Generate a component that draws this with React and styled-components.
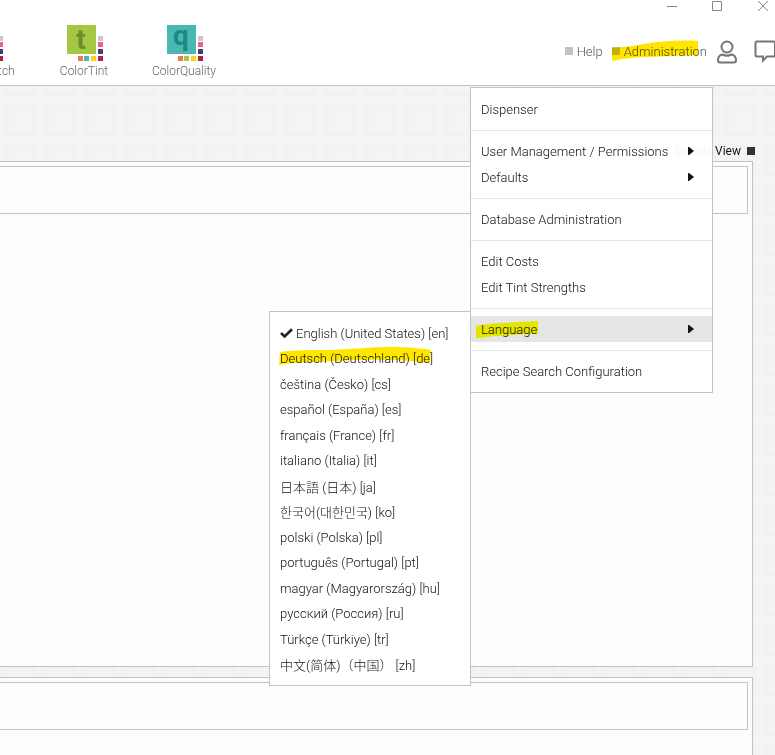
import React from "react";
import styled, { createGlobalStyle } from "styled-components";

const patternTile = encodeURIComponent(
  `<svg xmlns="http://www.w3.org/2000/svg" width="40" height="40"><rect width="40" height="40" fill="#f4f4f4"/><rect x="7" y="7" width="27" height="27" fill="#f4f4f4" stroke="#f1f1f1" stroke-width="3"/></svg>`
);

const GlobalStyle = createGlobalStyle`
  * {
    box-sizing: border-box;
  }

  body {
    margin: 0;
    background: #f4f4f4;
    font-family: Roboto, "Noto Sans CJK JP", sans-serif;
    font-size: 13px;
    font-weight: 300;
    color: #111;
  }

  button {
    padding: 0;
    border: 0;
    background: none;
    font: inherit;
    color: inherit;
    cursor: pointer;
  }

  svg {
    display: block;
    overflow: visible;
  }
`;

const Page = styled.div`
  display: flex;
  flex-direction: column;
  min-height: 100vh;
  background: url("data:image/svg+xml,${patternTile}") 0 20px;
`;

const Header = styled.header`
  position: relative;
  background: #fff;
  border-bottom: 1px solid #c3c3c3;
`;

const WindowBar = styled.div`
  display: flex;
  justify-content: flex-end;
  gap: 34px;
  padding-right: 6px;
`;

const WindowButton = styled.button`
  width: 12px;
  height: 13px;
`;

const HeaderRow = styled.div`
  display: flex;
  justify-content: space-between;
  padding: 12px 0 6px;
`;

const Apps = styled.nav`
  display: flex;
  margin-left: -66px;
`;

const AppLink = styled.a`
  display: flex;
  flex-direction: column;
  align-items: center;
  gap: 2px;
  width: 100px;
  color: #666;
  font-size: 12px;
  line-height: 16px;
  text-decoration: none;
`;

const AppLetter = styled.text`
  font-family: Roboto, sans-serif;
  font-size: 28px;
  font-weight: 700;
  text-anchor: middle;
`;

const Tools = styled.div`
  display: flex;
  align-items: flex-start;
  gap: 9px;
  padding-top: 15px;
`;

const ToolButton = styled.button`
  position: relative;
  display: flex;
  align-items: center;
  gap: 4px;
  height: 22px;
  color: #555;

  &::before {
    content: "";
    width: 8px;
    height: 8px;
    background: #c3c3c3;
  }
`;

const IconButton = styled.button`
  height: 24px;
  margin-right: 7px;
  color: #757575;

  &:last-child {
    margin-right: 0;
  }
`;

const Marker = styled.svg`
  position: absolute;
  left: ${({ $left }) => $left}px;
  bottom: ${({ $bottom }) => $bottom}px;
  mix-blend-mode: multiply;
  pointer-events: none;
`;

const MenuList = styled.ul`
  position: absolute;
  z-index: 2;
  margin: 0;
  padding: 8px 0;
  list-style: none;
  background: rgba(255, 255, 255, 0.96);
  border: 1px solid #c3c3c3;
`;

const AdminMenu = styled(MenuList)`
  top: 100%;
  right: 62px;
  width: 243px;
  margin-top: 2px;
`;

const LanguageMenu = styled(MenuList)`
  top: -5px;
  right: 100%;
  width: 202px;
`;

const Separator = styled.li`
  height: 1px;
  margin: 8px 0 7px;
  background: #e6e6e8;
`;

const MenuItem = styled.li`
  position: relative;
  background: ${({ $active }) => ($active ? "#e5e5e5" : "transparent")};
`;

const MenuButton = styled.button`
  display: flex;
  align-items: center;
  justify-content: space-between;
  width: 100%;
  height: 26px;
  padding: 0 18px 0 10px;
`;

const LanguageButton = styled.button`
  display: flex;
  align-items: center;
  gap: 3px;
  width: 100%;
  height: 26px;
  padding: 0 10px;
  white-space: nowrap;

  li:nth-child(even) > & {
    height: 25px;
  }
`;

const ViewBar = styled.div`
  display: flex;
  align-items: flex-end;
  justify-content: flex-end;
  height: 75px;
  padding: 0 20px 2px;
`;

const ViewButton = styled.button`
  display: flex;
  align-items: center;
  gap: 6px;
  height: 16px;
  font-size: 12px;
  font-weight: 400;

  &::after {
    content: "";
    width: 8px;
    height: 8px;
    background: #333;
  }
`;

const Main = styled.main`
  flex: 1;
  display: flex;
  flex-direction: column;
  gap: 10px;
  margin-right: 22px;
`;

const Panel = styled.section`
  flex: ${({ $grow }) => ($grow ? 1 : "none")};
  min-height: ${({ $grow }) => ($grow ? "78px" : "506px")};
  padding: 4px 4px 4px 0;
  background: #fdfdfd;
  border: solid #c3c3c3;
  border-width: ${({ $grow }) => ($grow ? "1px 1px 0 0" : "1px 1px 1px 0")};
`;

const PanelHead = styled.div`
  height: 48px;
  border: solid #c3c3c3;
  border-width: 1px 1px 1px 0;
`;

const apps = [
  {
    name: "ColorMatch",
    fill: "#e8609f",
    row: ["#f07850", "#4ab8b3", "#ffd418"],
  },
  {
    name: "ColorTint",
    letter: "t",
    baseline: 24,
    fill: "#a5c743",
    ink: "#6f8a26",
    row: ["#f07850", "#4ab8b3", "#ffd418"],
  },
  {
    name: "ColorQuality",
    letter: "q",
    baseline: 20,
    fill: "#49b7b2",
    ink: "#1d8a80",
    row: ["#f07850", "#a5c743", "#ffd418"],
  },
];

const swatches = ["#c8c8c8", "#e8609f", "#473a75", "#b5203c"];

const menuGroups = [
  [{ label: "Dispenser" }],
  [
    { label: "User Management / Permissions", arrow: true },
    { label: "Defaults", arrow: true },
  ],
  [{ label: "Database Administration" }],
  [{ label: "Edit Costs" }, { label: "Edit Tint Strengths" }],
  [{ label: "Language", arrow: true, open: true }],
  [{ label: "Recipe Search Configuration" }],
];

const languages = [
  { code: "en", label: "English (United States)" },
  { code: "de", label: "Deutsch (Deutschland)" },
  { code: "cs", label: "čeština (Česko)" },
  { code: "es", label: "español (España)" },
  { code: "fr", label: "français (France)" },
  { code: "it", label: "italiano (Italia)" },
  { code: "ja", label: "日本語 (日本)" },
  { code: "ko", label: "한국어(대한민국)" },
  { code: "pl", label: "polski (Polska)" },
  { code: "pt", label: "português (Portugal)" },
  { code: "hu", label: "magyar (Magyarország)" },
  { code: "ru", label: "русский (Россия)" },
  { code: "tr", label: "Türkçe (Türkiye)" },
  { code: "zh", label: "中文(简体)（中国）" },
];

const AppIcon = ({ letter, baseline, fill, ink, row }) => (
  <svg width="38" height="36" viewBox="-2 0 38 36">
    <rect width="29" height="29" fill={fill} />
    {letter && (
      <AppLetter x="14" y={baseline} fill={ink}>
        {letter}
      </AppLetter>
    )}
    {swatches.map((color, i) => (
      <rect key={color} x="31" y={[11, 17, 24, 31][i]} width="5" height="5" fill={color} />
    ))}
    {row.map((color, i) => (
      <rect key={color} x={[11, 17, 24][i]} y="31" width="5" height="5" fill={color} />
    ))}
  </svg>
);

const Arrow = () => (
  <svg width="6" height="10" viewBox="0 0 6 10">
    <path d="M0 1h1l5 4-5 4H0z" fill="#111" />
  </svg>
);

const Check = () => (
  <svg width="13" height="10" viewBox="0 0 13 10">
    <path d="M1 5l3.6 3.4L12 1.2" fill="none" stroke="#222" strokeWidth="2.6" />
  </svg>
);

const LanguageItems = () => (
  <LanguageMenu>
    {languages.map(({ code, label }) => (
      <MenuItem key={code}>
        <LanguageButton lang={code}>
          {code === "en" && <Check />}
          {label} [{code}]
        </LanguageButton>
        {code === "de" && (
          <Marker $left={9} $bottom={5} width="153" height="19" viewBox="0 0 153 19">
            <path
              d="M1 5C16 3 34 3 52 3 75 2 92 0 112 0c16 0 28 1 40 3l-1 13c-22-3-42-4-64-3-22 0-40 2-56 2-12 0-20 1-31 3z"
              fill="#ffe600"
            />
          </Marker>
        )}
      </MenuItem>
    ))}
  </LanguageMenu>
);

const App = () => {
  return (
    <Page>
      <GlobalStyle />
      <Header>
        <WindowBar>
          <WindowButton aria-label="Minimize">
            <svg width="12" height="13" viewBox="0 0 12 13">
              <path d="M2 6.5h10" stroke="#888" />
            </svg>
          </WindowButton>
          <WindowButton aria-label="Maximize">
            <svg width="12" height="13" viewBox="0 0 12 13">
              <path d="M1.500 1.500h9v9h-9z" fill="none" stroke="#888" />
            </svg>
          </WindowButton>
          <WindowButton aria-label="Close">
            <svg width="12" height="13" viewBox="0 0 12 13">
              <path d="M1 1l10 10M11 1L1 11" stroke="#888" />
            </svg>
          </WindowButton>
        </WindowBar>
        <HeaderRow>
          <Apps>
            {apps.map((app) => (
              <AppLink key={app.name} href="#">
                <AppIcon {...app} />
                {app.name}
              </AppLink>
            ))}
          </Apps>
          <Tools>
            <ToolButton>Help</ToolButton>
            <ToolButton aria-expanded="true">
              Administration
              <Marker $left={0} $bottom={1} width="87" height="20" viewBox="0 0 87 20">
                <path
                  d="M0 7c16-1 26-3 38-5 16-2 30-3 48-2v14c-20 1-34 1-48 2-14 0-23 1-38 4z"
                  fill="#ffe600"
                />
              </Marker>
            </ToolButton>
            <IconButton aria-label="Account">
              <svg width="22" height="24" viewBox="0 0 22 24">
                <g fill="none" stroke="currentColor" strokeWidth="2">
                  <circle cx="11" cy="7" r="5.500" />
                  <path d="M6.500 14.500C3.500 15 2 17 2 20.500c0 1.500.5 2 2 2h14c1.500 0 2-.5 2-2 0-3.500-1.500-5.500-4.500-6-3 1.500-6 1.500-9 0z" />
                </g>
              </svg>
            </IconButton>
            <IconButton aria-label="Messages">
              <svg width="21" height="24" viewBox="0 0 21 24">
                <path
                  d="M3 1.500h16.500c1 0 1.500.5 1.500 1.500v12c0 1-.5 1.500-1.500 1.500H13l-4 4v-4H3c-1 0-1.500-.5-1.500-1.500V3C1.500 2 2 1.500 3 1.500z"
                  fill="none"
                  stroke="currentColor"
                  strokeWidth="2"
                />
              </svg>
            </IconButton>
          </Tools>
        </HeaderRow>

        <AdminMenu>
          {menuGroups.map((group, i) => (
            <React.Fragment key={group[0].label}>
              {i > 0 && <Separator role="separator" />}
              {group.map(({ label, arrow, open }) => (
                <MenuItem key={label} $active={open}>
                  <MenuButton>
                    {label}
                    {arrow && <Arrow />}
                  </MenuButton>
                  {open && (
                    <>
                      <Marker $left={5} $bottom={3} width="62" height="18" viewBox="0 0 62 18">
                        <path
                          d="M0 5c14-3 30-3 44-4l18-1v13c-16 0-28 1-40 2-8 0-14 2-22 2z"
                          fill="#ffff00"
                        />
                      </Marker>
                      <LanguageItems />
                    </>
                  )}
                </MenuItem>
              ))}
            </React.Fragment>
          ))}
        </AdminMenu>
      </Header>

      <ViewBar>
        <ViewButton>Details View</ViewButton>
      </ViewBar>
      <Main>
        <Panel>
          <PanelHead />
        </Panel>
        <Panel $grow>
          <PanelHead />
        </Panel>
      </Main>
    </Page>
  );
};

export default App;
